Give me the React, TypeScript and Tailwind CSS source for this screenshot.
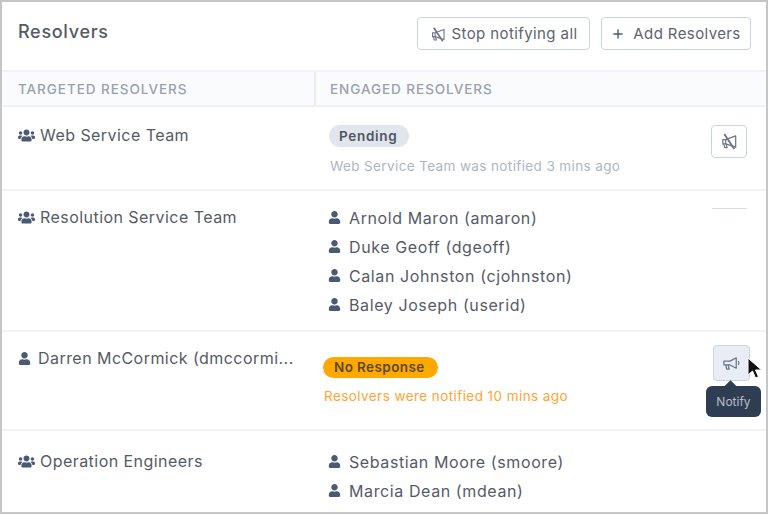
import { Plus } from "lucide-react";
import { FaUser, FaUsers } from "react-icons/fa";

function BullhornOutline({ className }: { className?: string }) {
  return (
    <svg className={className} viewBox="0 0 20 20" fill="none" stroke="currentColor" strokeWidth="1.3" strokeLinejoin="round">
      <path d="M2 7.500h6.500L15 4v11L8.500 11.500H2z" />
      <path d="M4 11.500l1 4.500h2.500l-1-4.500" />
      <path d="M17 7.500c1 1 1 3 0 4" />
    </svg>
  );
}

// bullhorn crossed by a diagonal, reads almost like an "N" at this size
function BullhornOff({ className }: { className?: string }) {
  return (
    <svg className={className} viewBox="0 0 20 20" fill="none" stroke="currentColor" strokeWidth="1.3" strokeLinejoin="round">
      <path d="M3 8h3v4.500H3z" />
      <path d="M6 8l10.500-4v12L6 12.500" />
      <path d="M4 12.500l1 4h2.500l-1-3.500" />
      <path d="M4.500 2l10.500 16" strokeWidth="1.900" />
    </svg>
  );
}

function Person({ name }: { name: string }) {
  return (
    <div className="flex h-[29px] items-center gap-[8px] text-[16px] tracking-[0.6px] text-[#555b66]">
      <FaUser className="size-[13px] shrink-0 text-[#4a5a75]" />
      <span>{name}</span>
    </div>
  );
}

function Target({ name, single }: { name: string; single?: boolean }) {
  return (
    <div className="flex w-[314px] shrink-0 items-center gap-[5px] self-start pl-[16px] text-[16px] leading-[20px] tracking-[0.45px] text-[#555b66]">
      {single ? (
        <FaUser className="mr-[2px] size-[13px] shrink-0 text-[#4a5a75]" />
      ) : (
        <FaUsers className="size-[17px] shrink-0 text-[#4a5a75]" />
      )}
      <span className="truncate">{name}</span>
    </div>
  );
}

export default function App() {
  return (
    <div className="h-[515px] w-[769px] bg-white font-['Inter',sans-serif]">
      <div className="flex h-[514px] w-[768px] flex-col overflow-hidden border-2 border-[#c6c6c6]">
        <header className="flex h-[68px] shrink-0 items-start justify-between pl-[16px] pr-[15px]">
          <h1 className="mt-[19px] text-[18px] leading-[22px] font-medium tracking-[0.7px] text-[#555a63]">Resolvers</h1>
          <div className="mt-[15px] flex gap-[11px]">
            <button className="flex h-[33px] w-[173px] items-center justify-center gap-[5px] rounded-[4px] border border-[#c9d3e3] bg-white pt-px text-[15px] tracking-[0.4px] text-[#5d6470]">
              <BullhornOff className="size-[17px] text-[#6b7485]" />
              Stop notifying all
            </button>
            <button className="flex h-[33px] w-[150px] items-center justify-center gap-[8px] rounded-[4px] border border-[#c9d3e3] bg-white pt-px text-[15px] tracking-[0.4px] text-[#5d6470]">
              <Plus className="size-[14px] text-[#4a5a75]" strokeWidth={2.4} />
              Add Resolvers
            </button>
          </div>
        </header>

        <div className="flex h-[37px] shrink-0 items-center border-y-2 border-[#eef1f6] bg-[#fafbfc] text-[13.5px] font-medium tracking-[0.95px] text-[#98a1ae]">
          <div className="flex h-full w-[314px] items-center border-r-2 border-[#e9edf3] pl-[16px] pt-px">TARGETED RESOLVERS</div>
          <div className="pl-[14px] pt-px">ENGAGED RESOLVERS</div>
        </div>

        <section className="flex h-[84px] shrink-0 border-b-2 border-[#f2f3f5] pt-[18px]">
          <Target name="Web Service Team" />
          <div className="flex-1 pl-[13px]">
            <span className="block w-fit rounded-full bg-[#e1e5ec] px-[10px] pr-[12px] text-[13.5px] leading-[22px] font-semibold tracking-[0.7px] text-[#4f5561]">
              Pending
            </span>
            <p className="mt-[10px] pl-px text-[13.5px] leading-[18px] tracking-[0.38px] text-[#aeb6c6]">Web Service Team was notified 3 mins ago</p>
          </div>
          <button className="mr-[19px] flex h-[33px] w-[36px] items-center justify-center rounded-[4px] border border-[#c9d3e3] bg-white text-[#6b7485]">
            <BullhornOff className="size-[19px]" />
          </button>
        </section>

        <section className="flex h-[141px] shrink-0 border-b-2 border-[#f2f3f5] pt-[16px]">
          <Target name="Resolution Service Team" />
          <div className="-mt-[4px] flex-1 pl-[12px]">
            <Person name="Arnold Maron (amaron)" />
            <Person name="Duke Geoff (dgeoff)" />
            <Person name="Calan Johnston (cjohnston)" />
            <Person name="Baley Joseph (userid)" />
          </div>
          <div className="mr-[19px] mt-px h-px w-[35px] bg-[#d7deea]" />
        </section>

        <section className="relative flex h-[99px] shrink-0 border-b-2 border-[#f2f3f5] pt-[16px]">
          <Target name="Darren McCormick (dmccormi..." single />
          <div className="flex-1 pl-[7px] pt-[9px]">
            <span className="block w-fit rounded-full bg-[#ffa800] px-[11px] pr-[13px] text-[13.5px] leading-[21px] font-semibold tracking-[0.4px] text-[#5a4a22]">
              No Response
            </span>
            <p className="mt-[9px] pl-px text-[13.5px] leading-[18px] tracking-[0.43px] text-[#ffa436]">Resolvers were notified 10 mins ago</p>
          </div>
          <button className="mr-[16px] -mt-[3px] flex h-[36px] w-[37px] items-center justify-center rounded-[4px] border border-[#cbd4e3] bg-[#e8ecf4] text-[#6b7485]">
            <BullhornOutline className="size-[19px]" />
          </button>
          <div className="absolute left-[704px] top-[54px] flex h-[31px] w-[55px] items-center justify-center rounded-[6px] bg-[#2f3d52] text-[12px] text-[#b6bdc9]">
            <span className="absolute left-[20px] top-[-4px] size-[9px] rotate-45 bg-[#2f3d52]" />
            <span className="relative">Notify</span>
          </div>
          <svg className="absolute left-[745px] top-[25px]" width="15" height="24" viewBox="0 0 15 24">
            <path d="M1 1v17l4.500-4 3 7 3-1.300-3-6.700h6z" fill="#111" stroke="#fff" strokeWidth="1" />
          </svg>
        </section>

        <section className="flex min-h-0 flex-1 pt-[20px]">
          <Target name="Operation Engineers" />
          <div className="-mt-[4px] flex-1 pl-[12px]">
            <Person name="Sebastian Moore (smoore)" />
            <Person name="Marcia Dean (mdean)" />
          </div>
        </section>
      </div>
    </div>
  );
}
